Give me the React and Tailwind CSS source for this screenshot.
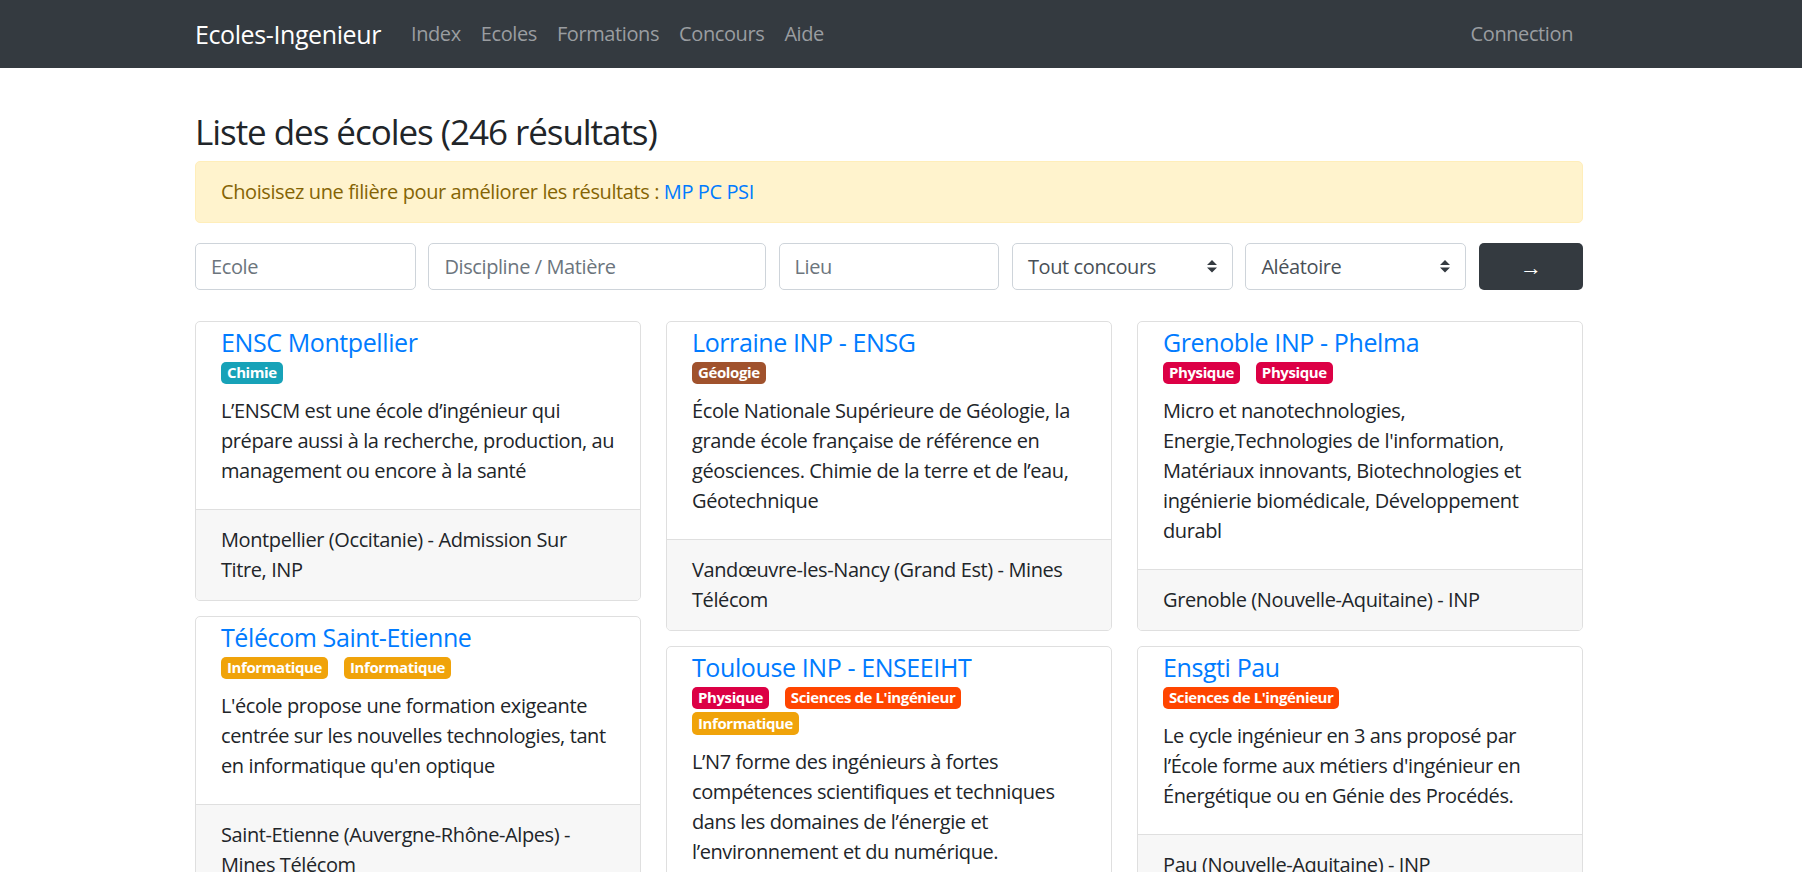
import React from "react";

const BADGE = {
  Chimie: "bg-[#17a2b8]",
  "Géologie": "bg-[#a0522d]",
  Physique: "bg-[#dc0045]",
  Informatique: "bg-[#f0a30a]",
  "Sciences de L'ingénieur": "bg-[#ff4500]",
};

const cols = [
  [
    {
      title: "ENSC Montpellier",
      badges: ["Chimie"],
      text: "L’ENSCM est une école d’ingénieur qui prépare aussi à la recherche, production, au management ou encore à la santé",
      footer: "Montpellier (Occitanie) - Admission Sur Titre, INP",
    },
    {
      title: "Télécom Saint-Etienne",
      badges: ["Informatique", "Informatique"],
      text: "L'école propose une formation exigeante centrée sur les nouvelles technologies, tant en informatique qu'en optique",
      footer: "Saint-Etienne (Auvergne-Rhône-Alpes) - Mines Télécom",
    },
  ],
  [
    {
      title: "Lorraine INP - ENSG",
      badges: ["Géologie"],
      text: "École Nationale Supérieure de Géologie, la grande école française de référence en géosciences. Chimie de la terre et de l’eau, Géotechnique",
      footer: "Vandœuvre-les-Nancy (Grand Est) - Mines Télécom",
    },
    {
      title: "Toulouse INP - ENSEEIHT",
      badges: ["Physique", "Sciences de L'ingénieur", "Informatique"],
      text: "L’N7 forme des ingénieurs à fortes compétences scientifiques et techniques dans les domaines de l’énergie et l’environnement et du numérique.",
      footer: "Toulouse (Occitanie) - INP",
    },
  ],
  [
    {
      title: "Grenoble INP - Phelma",
      badges: ["Physique", "Physique"],
      text: "Micro et nanotechnologies, Energie,Technologies de l'information, Matériaux innovants, Biotechnologies et ingénierie biomédicale, Développement durabl",
      footer: "Grenoble (Nouvelle-Aquitaine) - INP",
    },
    {
      title: "Ensgti Pau",
      badges: ["Sciences de L'ingénieur"],
      text: "Le cycle ingénieur en 3 ans proposé par l’École forme aux métiers d'ingénieur en Énergétique ou en Génie des Procédés.",
      footer: "Pau (Nouvelle-Aquitaine) - INP",
    },
  ],
];

function Card({ c }) {
  return (
    <div className="rounded-[5px] border border-[#dfdfdf] bg-white overflow-hidden">
      <div className="px-[25px] pt-[5px] pb-[23px]">
        <a className="block text-[25px] leading-[30px] text-[#007bff]">{c.title}</a>
        <div className="mt-[4.5px] flex flex-wrap gap-y-[3px]">
          {c.badges.map((b, i) => (
            <span
              key={i}
              className={`${BADGE[b]} mr-[16px] text-white text-[15px] font-bold leading-[15px] px-[6px] py-[3.75px] rounded-[5px]`}
            >
              {b}
            </span>
          ))}
        </div>
        <p className="mt-[12px] text-[20px] leading-[30px] text-[#212529]">{c.text}</p>
      </div>
      <div className="border-t border-[#dfdfdf] bg-[#f7f7f7] px-[25px] py-[15px] text-[20px] leading-[30px] text-[#212529]">
        {c.footer}
      </div>
    </div>
  );
}

function Arrows() {
  return (
    <svg width="10" height="12.5" viewBox="0 0 4 5" className="shrink-0">
      <path d="M2 0L0 2h4zm0 5L0 3h4z" fill="#343a40" />
    </svg>
  );
}

export default function App() {
  return (
    <div className="min-h-screen bg-white font-['Open_Sans','Noto_Sans',sans-serif] tracking-[-0.025em] text-[#212529]">
      <nav className="h-[68px] bg-[#343a40]">
        <div className="ml-[195px] w-[1388px] h-full flex items-center">
          <span className="text-[25px] leading-[30px] text-white mr-[20px]">Ecoles-Ingenieur</span>
          <div className="flex text-[20px] leading-[30px] text-[#9a9da0]">
            <a className="px-[10px]">Index</a>
            <a className="px-[10px]">Ecoles</a>
            <a className="px-[10px]">Formations</a>
            <a className="px-[10px]">Concours</a>
            <a className="px-[10px]">Aide</a>
          </div>
          <a className="ml-auto px-[10px] text-[20px] leading-[30px] text-[#9a9da0]">Connection</a>
        </div>
      </nav>

      <div className="ml-[195px] w-[1388px]">
        <h2 className="mt-[43px] mb-[8px] text-[35px] leading-[42px] font-normal tracking-[-0.03em]">
          Liste des écoles (246 résultats)
        </h2>

        <div className="rounded-[5px] border border-[#ffeeba] bg-[#fff3cd] px-[25px] py-[15px] text-[20px] leading-[30px] text-[#856404]">
          Choisisez une filière pour améliorer les résultats :{" "}
          <a className="text-[#007bff]">MP</a> <a className="text-[#007bff]">PC</a>{" "}
          <a className="text-[#007bff]">PSI</a>
        </div>

        <div className="mt-[20px] grid grid-cols-12 gap-x-[12.5px] text-[20px]">
          <div className="col-span-2 h-[47px] rounded-[5px] border border-[#ced4da] px-[15px] flex items-center text-[#6c757d]">Ecole</div>
          <div className="col-span-3 h-[47px] rounded-[5px] border border-[#ced4da] px-[15px] flex items-center text-[#6c757d]">Discipline / Matière</div>
          <div className="col-span-2 h-[47px] rounded-[5px] border border-[#ced4da] px-[15px] flex items-center text-[#6c757d]">Lieu</div>
          <div className="col-span-2 h-[47px] rounded-[5px] border border-[#ced4da] pl-[15px] pr-[15px] flex items-center justify-between text-[#495057]">
            <span>Tout concours</span>
            <Arrows />
          </div>
          <div className="col-span-2 h-[47px] rounded-[5px] border border-[#ced4da] pl-[15px] pr-[15px] flex items-center justify-between text-[#495057]">
            <span>Aléatoire</span>
            <Arrows />
          </div>
          <button className="col-span-1 h-[47px] rounded-[5px] bg-[#343a40] text-white text-[22px] flex items-center justify-center">→</button>
        </div>

        <div className="mt-[31px] grid grid-cols-3 gap-x-[25px] items-start">
          {cols.map((col, i) => (
            <div key={i} className="flex flex-col gap-[15px]">
              {col.map((c, j) => (
                <Card key={j} c={c} />
              ))}
            </div>
          ))}
        </div>
        <div className="h-[40px]" />
      </div>
    </div>
  );
}
